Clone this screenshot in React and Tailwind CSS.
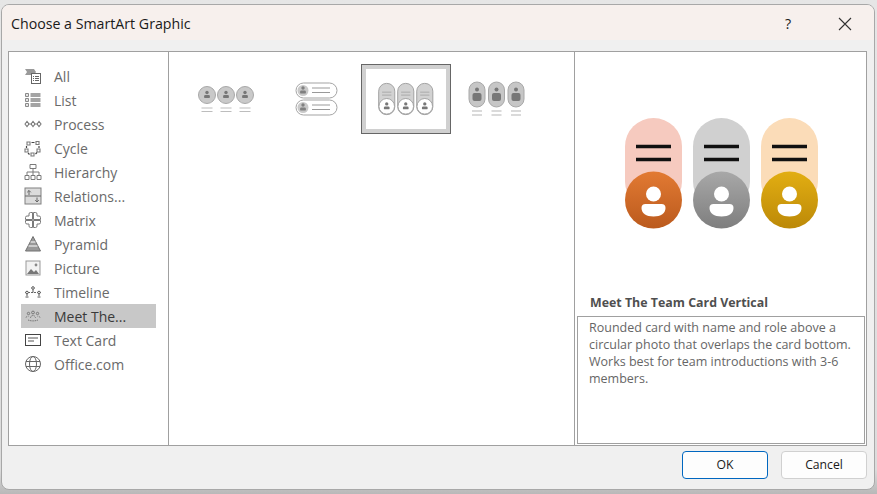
import React from 'react';

const FONT = 'font-["Open_Sans","Noto_Sans",sans-serif]';

const Ico = ({ children }) => (
  <svg width="18" height="18" viewBox="0 0 18 18" fill="none" stroke="#7a7a7a" strokeWidth="1" className="shrink-0">
    {children}
  </svg>
);

const categories = [
  {
    name: 'All',
    icon: (
      <>
        <path d="M1 2h9l2 3-2 3H1l2-3z" fill="#9a9a9a" stroke="none" />
        <rect x="7.5" y="6.5" width="9" height="10" fill="#fff" stroke="#666" />
        <path d="M9 9.5h1M11 9.5h4M9 11.5h1M11 11.5h4M9 13.5h1M11 13.5h4" stroke="#666" />
      </>
    ),
  },
  {
    name: 'List',
    icon: (
      <>
        <path d="M1.5 2.5h3v3h-3zM1.5 7.5h3v3h-3zM1.5 12.5h3v3h-3z" stroke="#8a8a8a" fill="#e4e4e4" />
        <path d="M6.5 2h10v4h-10zM6.5 7h10v4h-10zM6.5 12h10v4h-10z" fill="#a4a4a4" stroke="none" />
      </>
    ),
  },
  {
    name: 'Process',
    icon: (
      <path d="M1 9l2-2.5L5 9l-2 2.5zM7 9l2-2.5L11 9l-2 2.5zM13 9l2-2.5L17 9l-2 2.5zM4 9h4M10 9h4" strokeWidth="1.1" />
    ),
  },
  {
    name: 'Cycle',
    icon: (
      <>
        <path d="M3 3h3v3H3zM12 2.5h3v3h-3zM13 10h3v3h-3zM7 14h3v3H7zM1 10h3v3H1z" fill="#fff" strokeWidth="1.1" />
        <path d="M7.5 3.5h3M15 7v2M11.5 15l1.5-1.5M5.5 15.5L4 14M2.5 9V7" stroke="#444" strokeWidth="1.2" />
      </>
    ),
  },
  {
    name: 'Hierarchy',
    icon: (
      <>
        <path d="M6 1.5h6v4H6zM1 12.5h4v4H1zM7 12.5h4v4H7zM13 12.5h4v4h-4z" />
        <path d="M9 5.5v7M3 12.5V9h12v3.5" />
      </>
    ),
  },
  {
    name: 'Relations...',
    icon: (
      <>
        <rect x="1" y="1" width="16" height="16" fill="#dcdcdc" stroke="#808080" />
        <path d="M1 9h16M5 8V3.5M3.2 5.3L5 3.5l1.8 1.8M13 10.5V15M11.2 13.2L13 15l1.8-1.8" stroke="#666" />
      </>
    ),
  },
  {
    name: 'Matrix',
    icon: (
      <>
        <path d="M8.5 1.5H6.500A1.500 1.500 0 0 0 5 3v2H3A1.500 1.500 0 0 0 1.500 6.500v2h7z" />
        <path d="M9.500 1.500h2A1.500 1.500 0 0 1 13 3v2h2a1.500 1.500 0 0 1 1.500 1.500v2h-7z" />
        <path d="M8.500 16.500H6.500A1.500 1.500 0 0 1 5 15v-2H3a1.500 1.500 0 0 1-1.500-1.500v-2h7z" />
        <path d="M9.500 16.500h2A1.500 1.500 0 0 0 13 15v-2h2a1.500 1.500 0 0 0 1.500-1.500v-2h-7z" />
      </>
    ),
  },
  {
    name: 'Pyramid',
    icon: (
      <>
        <path d="M9 1.500L16.500 16h-15z" fill="#999" stroke="#707070" />
        <path d="M6.500 7h5M4.500 11h9" stroke="#fff" />
      </>
    ),
  },
  {
    name: 'Picture',
    icon: (
      <>
        <rect x="2" y="2" width="14" height="14" fill="#f2f2f2" stroke="#999" />
        <path d="M3 15l4-5 3 3 2-2 3 4z" fill="#777" stroke="none" />
        <circle cx="12" cy="6" r="1.400" fill="#888" stroke="none" />
      </>
    ),
  },
  {
    name: 'Timeline',
    icon: (
      <>
        <path d="M1 9.500h16" stroke="#666" strokeDasharray="2 1" />
        <circle cx="3" cy="9.500" r="1.300" fill="#fff" stroke="#555" />
        <circle cx="9" cy="5" r="1.300" fill="#fff" stroke="#555" />
        <circle cx="15" cy="9.500" r="1.300" fill="#fff" stroke="#555" />
        <path d="M9 6.500v3M1.500 14h3M13.500 14h3M3 11v2M15 11v2" stroke="#555" />
      </>
    ),
  },
  {
    name: 'Meet The...',
    selected: true,
    icon: (
      <>
        <circle cx="9" cy="5.500" r="1.400" stroke="#777" />
        <circle cx="4.500" cy="6.500" r="1.200" stroke="#777" />
        <circle cx="13.500" cy="6.500" r="1.200" stroke="#777" />
        <path d="M6.500 11a2.500 2.500 0 0 1 5 0M2 10.500a2 1.500 0 0 1 2.500-1.200M16 10.500a2 1.500 0 0 0-2.500-1.200M4 13c3 1.200 7 1.200 10 0" stroke="#777" strokeDasharray="1.500 0.700" />
      </>
    ),
  },
  {
    name: 'Text Card',
    icon: (
      <>
        <rect x="1.500" y="3.500" width="15" height="11" stroke="#444" />
        <path d="M4 7h10M4 10h6" stroke="#555" />
      </>
    ),
  },
  {
    name: 'Office.com',
    icon: (
      <>
        <circle cx="9" cy="9" r="7.500" stroke="#666" />
        <ellipse cx="9" cy="9" rx="3.500" ry="7.500" stroke="#666" />
        <path d="M2 6.500h14M2 11.500h14" stroke="#666" />
      </>
    ),
  },
];

// tiny person inside a thumbnail
const Person = ({ x, y, fill = '#777' }) => (
  <>
    <circle cx={x} cy={y - 2} r="1.700" fill={fill} />
    <rect x={x - 2.9} y={y + 0.6} width="5.800" height="3" rx="1.200" fill={fill} />
  </>
);

const Thumb = ({ kind }) => (
  <svg width="82" height="62" viewBox="0 0 82 62" className="blur-[0.4px]">
    {kind === 'circles' &&
      [13, 32, 51].map((x) => (
        <g key={x}>
          <circle cx={x + 9} cy="27" r="8.500" fill="#c9c9c9" stroke="#a8a8a8" />
          <Person x={x + 9} y={26.5} />
          <path d={`M${x + 3.5} 40h11M${x + 3.5} 43.500h11`} stroke="#bdbdbd" strokeWidth="1.200" />
        </g>
      ))}
    {kind === 'rows' &&
      [15, 32].map((y) => (
        <g key={y}>
          <rect x="21" y={y} width="41" height="15" rx="7.500" fill="#fff" stroke="#a3a3a3" />
          <circle cx="28" cy={y + 7.5} r="5.500" fill="#c9c9c9" />
          <Person x={28} y={y + 7} fill="#808080" />
          <path d={`M37 ${y + 5}h18M37 ${y + 9.5}h18`} stroke="#999" strokeWidth="1.100" />
        </g>
      ))}
    {kind === 'cards' &&
      [13, 32.5, 52].map((x) => (
        <g key={x}>
          <rect x={x} y="15" width="16.500" height="32" rx="8" fill="#d2d2d2" stroke="#a0a0a0" />
          <path d={`M${x + 3.5} 24h9.500M${x + 3.5} 27h9.500`} stroke="#aaa" strokeWidth="1" />
          <circle cx={x + 8.25} cy="38.500" r="8" fill="#fff" stroke="#a0a0a0" />
          <Person x={x + 8.25} y={38} />
        </g>
      ))}
    {kind === 'tall' &&
      [14, 33.5, 53].map((x) => (
        <g key={x}>
          <rect x={x} y="14" width="16" height="25" rx="8" fill="#c6c6c6" stroke="#a8a8a8" />
          <circle cx={x + 8} cy="21.500" r="2" fill="#777" />
          <rect x={x + 3.5} y="25" width="9" height="8" rx="2" fill="#777" />
          <path d={`M${x + 3} 43h10M${x + 3} 47h10`} stroke="#b5b5b5" strokeWidth="1.100" />
        </g>
      ))}
  </svg>
);

const thumbs = ['circles', 'rows', 'cards', 'tall'];

const previews = [
  { x: 15, card: '#f6cabf', from: '#e27a33', to: '#bb5a1d', id: 'orange' },
  { x: 83, card: '#d0d0d0', from: '#a8a8a8', to: '#7e7e7e', id: 'grey' },
  { x: 151, card: '#fbdcb8', from: '#e2ae12', to: '#bc8908', id: 'gold' },
];

const Preview = () => (
  <svg width="220" height="130" viewBox="0 0 220 130">
    <defs>
      {previews.map((p) => (
        <linearGradient key={p.id} id={p.id} x1="0" y1="0" x2="0" y2="1">
          <stop offset="0" stopColor={p.from} />
          <stop offset="1" stopColor={p.to} />
        </linearGradient>
      ))}
    </defs>
    {previews.map((p) => (
      <g key={p.id}>
        <rect x={p.x} y="13" width="57" height="92" rx="28.500" fill={p.card} />
        <path d={`M${p.x + 11} 41.500h35M${p.x + 11} 54.500h35`} stroke="#111" strokeWidth="3.400" />
        <circle cx={p.x + 28.5} cy="95" r="28.500" fill={`url(#${p.id})`} />
        <circle cx={p.x + 28.5} cy="89" r="7.500" fill="#fff" />
        <path d={`M${p.x + 20.5} 99h16a4 4 0 0 1 4 4c0 5-4.500 8.500-12 8.500s-12-3.500-12-8.500a4 4 0 0 1 4-4z`} fill="#fff" />
      </g>
    ))}
  </svg>
);

export default function App() {
  return (
    <div className={`w-[877px] h-[494px] bg-linear-to-b from-[#e6e6e6] via-[#dcdcdc] via-95% to-[#b8b8b8] pt-[4px] pl-[1px] pr-[2px] pb-[4px] overflow-hidden ${FONT}`}>
      <div className="h-full rounded-lg border border-[#a8a8a8] bg-[#f0f0f0] flex flex-col overflow-hidden">
        {/* title bar */}
        <div className="h-[35px] shrink-0 bg-[#f7f0ed] flex items-center pl-[9px] pt-[2px] text-[14.2px] text-[#1a1a1a]">
          <span className="flex-1">Choose a SmartArt Graphic</span>
          <span className="w-[20px] text-center mr-[40px]">?</span>
          <svg width="14" height="14" viewBox="0 0 14 14" stroke="#333" strokeWidth="1.100" className="mr-[22px]">
            <path d="M1 1l12 12M13 1L1 13" />
          </svg>
        </div>

        {/* main panel */}
        <div className="mt-[11px] ml-[6px] mr-[7px] h-[395px] shrink-0 bg-white border border-[#a0a0a0] flex">
          <ul className="w-[160px] shrink-0 border-r border-[#a0a0a0] pt-[12px] px-[12px] text-[14px] text-[#6a6a6a]">
            {categories.map((c) => (
              <li
                key={c.name}
                className={`h-[24px] flex items-center gap-[12px] pl-[3px] ${c.selected ? 'bg-[#c8c8c8] text-[#3a3a3a]' : ''}`}
              >
                <Ico>{c.icon}</Ico>
                <span>{c.name}</span>
              </li>
            ))}
          </ul>

          <div className="w-[406px] shrink-0 border-r border-[#a0a0a0] pt-[12px] pl-[12px] flex items-start">
            {thumbs.map((t) =>
              t === 'cards' ? (
                <div key={t} className="w-[90px] h-[70px] border border-[#666] bg-[#d0d0d0] p-[4px]">
                  <div className="h-full bg-white flex items-center justify-center">
                    <Thumb kind={t} />
                  </div>
                </div>
              ) : (
                <div key={t} className="w-[90px] h-[70px] flex items-center justify-center">
                  <Thumb kind={t} />
                </div>
              )
            )}
          </div>

          <div className="flex-1 flex flex-col">
            <div className="h-[240px] shrink-0 pt-[53px] pl-[35px]">
              <Preview />
            </div>
            <div className="pl-[15px] h-[24px] pb-[2px] flex items-center text-[12.4px] font-bold text-[#4f4f4f]">
              Meet The Team Card Vertical
            </div>
            <div className="ml-[2px] mr-[1px] flex-1 mb-[1px] border border-[#a0a0a0] pl-[11px] pr-[8px] pt-[2px] text-[12.5px] leading-[17px] text-[#666]">
              Rounded card with name and role above a circular photo that overlaps the card bottom. Works best for team introductions with 3-6 members.
            </div>
          </div>
        </div>

        {/* buttons */}
        <div className="flex-1 flex items-start justify-end gap-[13px] pt-[5px] pr-[7px] text-[12.2px] text-[#1a1a1a]">
          <button className="w-[86px] h-[28px] rounded-[4px] border border-[#0067c0] bg-[#fdfdfd]">OK</button>
          <button className="w-[86px] h-[28px] rounded-[4px] border border-[#d0d0d0] bg-[#fdfdfd]">Cancel</button>
        </div>
      </div>
    </div>
  );
}
